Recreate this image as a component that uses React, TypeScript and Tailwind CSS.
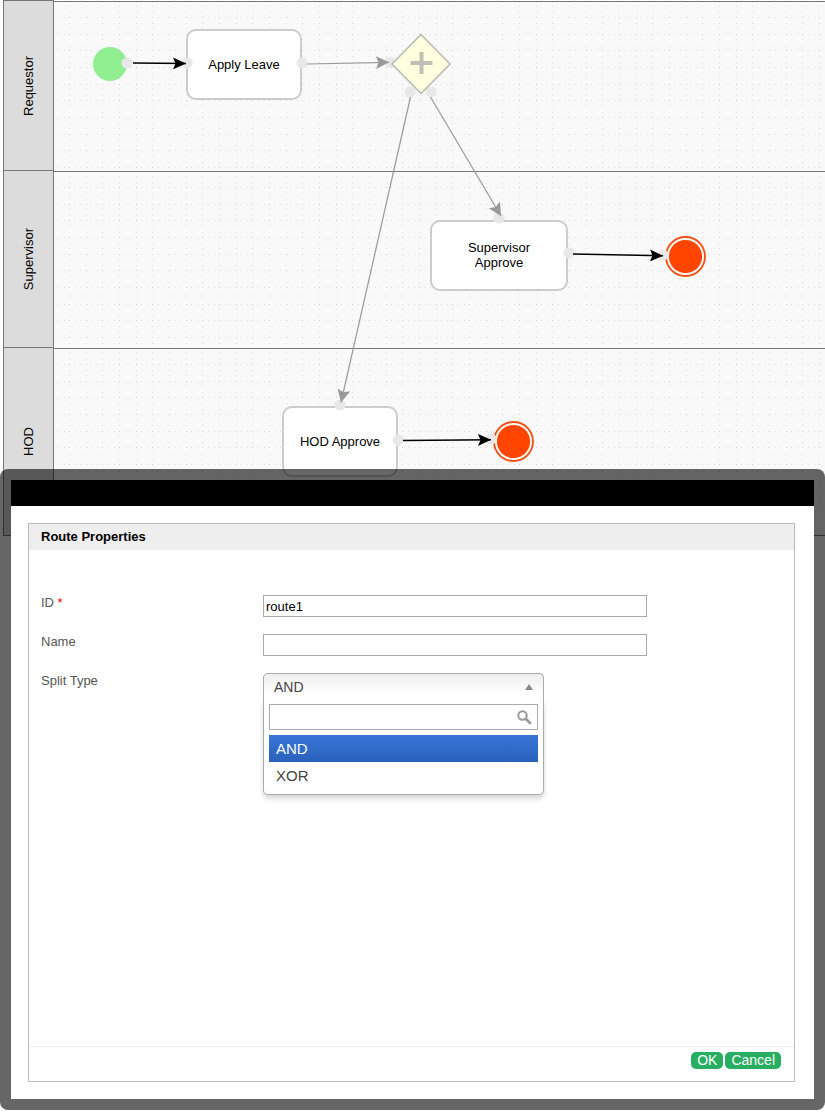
import React, { useState } from 'react';

const SPLIT_TYPES = ['AND', 'XOR'];

const LANES = [
  { name: 'Requestor', height: 'h-[170px]' },
  { name: 'Supervisor', height: 'h-[177px]' },
  { name: 'HOD', height: 'h-[188px]' },
];

// Connection points drawn on top of the nodes
const PORTS = [
  [127, 63],
  [187, 63],
  [302, 63],
  [390, 62],
  [410, 92],
  [431, 92],
  [499, 218],
  [569, 253],
  [663, 255],
  [340, 405],
  [398, 440],
  [491, 439],
];

const CONNECTORS = [
  { from: [133, 63], to: [186, 63.5], active: true },
  { from: [307, 64], to: [389, 62.3], active: false },
  { from: [410.5, 97], to: [341, 402.5], active: false },
  { from: [430.5, 97], to: [501, 216], active: false },
  { from: [573, 254], to: [663, 255.7], active: true },
  { from: [403, 440.5], to: [491, 439.8], active: true },
];

// Minor dots sit between the three major lines of each 50px tile
const GRID_STEPS = [4, 10, 15, 21, 26, 32, 37, 43, 48];
const GRID_MAJOR = [15, 32, 48];

const LaneGrid: React.FC<{ id: string }> = ({ id }) => (
  <svg className="block h-full w-full" aria-hidden="true">
    <defs>
      <pattern id={id} width="50" height="50" patternUnits="userSpaceOnUse">
        {GRID_MAJOR.map((line) =>
          GRID_STEPS.map((step) => (
            <g key={`${line}-${step}`} fill={GRID_MAJOR.includes(step) ? '#cdcdcd' : '#dedede'}>
              <rect x={step} y={line} width="1" height="1" />
              <rect x={line} y={step} width="1" height="1" />
            </g>
          ))
        )}
      </pattern>
    </defs>
    <rect width="100%" height="100%" fill={`url(#${id})`} />
  </svg>
);

const Task: React.FC<{ className: string; children: React.ReactNode }> = ({ className, children }) => (
  <div
    className={`absolute flex h-[71px] items-center justify-center rounded-[10px] border-2 border-[#ccc] bg-white pb-px text-center leading-[15px] ${className}`}
  >
    {children}
  </div>
);

const EndEvent: React.FC<{ cx: number; cy: number }> = ({ cx, cy }) => (
  <g>
    <circle cx={cx} cy={cy} r="19.5" fill="#fff8f0" stroke="#f04e14" strokeWidth="1.8" />
    <circle cx={cx} cy={cy} r="16.6" fill="#ff4500" />
  </g>
);

const ProcessCanvas: React.FC = () => (
  <main className="relative col-start-1 row-start-1 overflow-hidden">
    <div className="ml-[3px] border-b border-[#777]">
      {LANES.map((lane) => (
        <section key={lane.name} className={`flex ${lane.height}`}>
          <h2 className="flex w-[51px] shrink-0 items-center justify-center border border-b-0 border-[#777] bg-[#dcdcdc]">
            <span className="rotate-180 [writing-mode:vertical-rl]">{lane.name}</span>
          </h2>
          <div className="mt-px -mb-px min-w-0 flex-1 border-t border-[#777] bg-[#f9f9f9] bg-clip-padding pb-px">
            <LaneGrid id={`grid-${lane.name}`} />
          </div>
        </section>
      ))}
    </div>

    <Task className="top-[29px] left-[186px] w-[116px]">Apply Leave</Task>
    <Task className="top-[220px] left-[430px] w-[138px]">
      Supervisor
      <br />
      Approve
    </Task>
    <Task className="top-[406px] left-[282px] w-[116px]">HOD Approve</Task>

    <svg className="absolute top-0 left-0" width="825" height="540" aria-hidden="true">
      <defs>
        <marker id="arrow-active" markerUnits="userSpaceOnUse" markerWidth="14" markerHeight="12" refX="13" refY="6" orient="auto">
          <path d="M0 0 L13 6 L0 12 L2.5 6 Z" fill="#000" />
        </marker>
        <marker id="arrow-idle" markerUnits="userSpaceOnUse" markerWidth="14" markerHeight="14" refX="13" refY="7" orient="auto">
          <path d="M0 0.5 L13 7 L0 13.5 L2.5 7 Z" fill="#999" />
        </marker>
      </defs>
      <path d="M3 535.5 H825" stroke="#777" />
      <circle cx="110" cy="64" r="17" fill="#90ee90" />
      <EndEvent cx={685.5} cy={256.5} />
      <EndEvent cx={513.5} cy={441.5} />
      {PORTS.map(([x, y]) => (
        <circle key={`${x}-${y}`} cx={x} cy={y} r="5.6" fill="#e8e8e8" />
      ))}
      <path d="M421 34.5 L450 64 L421 93.5 L392 64 Z" fill="#ffffe0" stroke="#bdbdb8" strokeWidth="1.7" />
      <path d="M421.5 52 V74 M410.5 63 H432.5" stroke="#bfbfb4" strokeWidth="4" />
      {CONNECTORS.map(({ from, to, active }) => (
        <path
          key={`${from}-${to}`}
          d={`M${from[0]} ${from[1]} L${to[0]} ${to[1]}`}
          stroke={active ? '#000' : '#999'}
          strokeWidth={active ? 1.5 : 1.2}
          markerEnd={active ? 'url(#arrow-active)' : 'url(#arrow-idle)'}
        />
      ))}
    </svg>
  </main>
);

const SplitTypeSelect: React.FC = () => {
  const [open, setOpen] = useState(true);
  const [value, setValue] = useState('AND');
  const [query, setQuery] = useState('');

  const options = SPLIT_TYPES.filter((type) => type.toLowerCase().includes(query.toLowerCase()));

  return (
    <div className="relative w-[281px] text-[#444]">
      <button
        id="split-type"
        type="button"
        aria-haspopup="listbox"
        aria-expanded={open}
        onClick={() => setOpen(!open)}
        className="flex h-[26px] w-full items-center justify-between rounded-t-[5px] border border-b-0 border-[#aaa] bg-linear-to-b from-[#eee] to-white to-80% px-[10px] text-sm"
      >
        {value}
        <svg width="8" height="6" viewBox="0 0 8 6" className={open ? '' : 'rotate-180'} aria-hidden="true">
          <path d="M4 0 L8 6 H0 Z" fill="#888" />
        </svg>
      </button>
      {open && (
        <div className="absolute top-full left-0 w-full rounded-b-[5px] border border-t-0 border-[#aaa] bg-white p-[5px] shadow-[0_4px_5px_rgba(0,0,0,0.15)]">
          <div className="flex h-[26px] items-center border border-[#aaa] pr-1">
            <input
              type="text"
              aria-label="Search split type"
              value={query}
              onChange={(e) => setQuery(e.target.value)}
              className="h-full min-w-0 flex-1 px-1 outline-none"
            />
            <svg width="18" height="18" viewBox="0 0 18 18" fill="none" aria-hidden="true">
              <circle cx="7.5" cy="7.5" r="4.2" stroke="#999" strokeWidth="2" />
              <path d="M11 11 L15 15" stroke="#999" strokeWidth="2.8" strokeLinecap="round" />
            </svg>
          </div>
          <ul role="listbox" aria-label="Split Type" className="mt-[5px]">
            {options.map((type) => (
              <li
                key={type}
                role="option"
                aria-selected={type === value}
                onClick={() => setValue(type)}
                className={`h-[27px] cursor-pointer px-[7px] text-[15px] leading-[27px] ${
                  type === value ? 'bg-linear-to-b from-[#3875d7] to-[#2a62bc] text-white' : ''
                }`}
              >
                {type}
              </li>
            ))}
          </ul>
        </div>
      )}
    </div>
  );
};

const Field: React.FC<{ id: string; label: string; required?: boolean; children: React.ReactNode }> = ({
  id,
  label,
  required,
  children,
}) => (
  <div className="flex">
    <label htmlFor={id} className="w-[222px] shrink-0 leading-4 text-[#555]">
      {label}
      {required && <span className="text-[#e00]"> *</span>}
    </label>
    {children}
  </div>
);

const inputClass = 'h-[22px] w-[384px] min-w-0 border border-[#aaa] px-[2px] text-black outline-none';
const buttonClass = 'h-[17px] cursor-pointer rounded-[5px] bg-[#27ae60] px-[6px] text-sm leading-[17px] text-white';

const RouteDialog: React.FC = () => {
  const [id, setId] = useState('route1');
  const [name, setName] = useState('');

  return (
    <div
      role="dialog"
      aria-labelledby="dialog-title"
      className="relative col-start-1 row-start-1 mt-[469px] mb-[2px] rounded-lg bg-black/60 p-[11px]"
    >
      <div className="h-[26px] bg-black" />
      <div className="bg-white pt-[17px] pr-[19px] pb-[17px] pl-[17px]">
        <form className="border border-[#bbb]" onSubmit={(e) => e.preventDefault()}>
          <h1 id="dialog-title" className="bg-[#eee] px-3 leading-[26px] font-bold text-black">
            Route Properties
          </h1>
          <div className="flex min-h-[496px] flex-col gap-[17px] px-3 pt-[45px]">
            <Field id="route-id" label="ID" required>
              <input id="route-id" type="text" value={id} onChange={(e) => setId(e.target.value)} className={inputClass} />
            </Field>
            <Field id="route-name" label="Name">
              <input id="route-name" type="text" value={name} onChange={(e) => setName(e.target.value)} className={inputClass} />
            </Field>
            <Field id="split-type" label="Split Type">
              <SplitTypeSelect />
            </Field>
          </div>
          <div className="flex h-[35px] items-start justify-end gap-[2px] border-t border-[#eee] px-[13px] pt-[5px]">
            <button type="submit" className={buttonClass}>
              OK
            </button>
            <button type="button" className={buttonClass}>
              Cancel
            </button>
          </div>
        </form>
      </div>
    </div>
  );
};

export default function App() {
  return (
    <div className="grid grid-cols-1 bg-white font-['Liberation_Sans',Arial,sans-serif] text-[13px] text-black">
      <ProcessCanvas />
      <RouteDialog />
    </div>
  );
}
